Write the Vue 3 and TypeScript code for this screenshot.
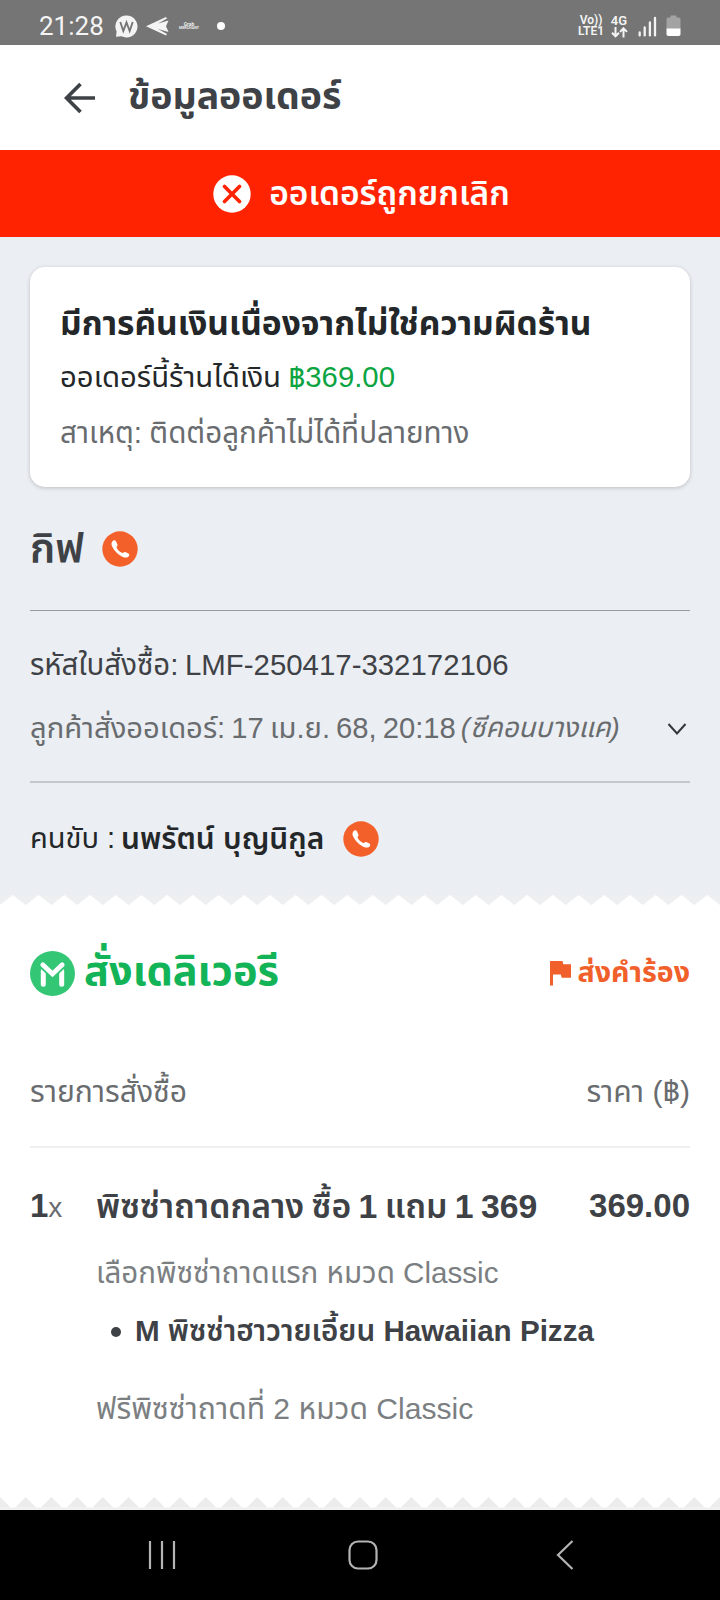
<script setup lang="ts">
interface Option {
  title: string
  choices: string[]
}

const refund = {
  title: 'มีการคืนเงินเนื่องจากไม่ใช่ความผิดร้าน',
  label: 'ออเดอร์นี้ร้านได้เงิน',
  amount: '฿369.00',
  reason: 'สาเหตุ: ติดต่อลูกค้าไม่ได้ที่ปลายทาง',
}

const options: Option[] = [
  { title: 'เลือกพิซซ่าถาดแรก หมวด Classic', choices: ['M พิซซ่าฮาวายเอี้ยน Hawaiian Pizza'] },
  { title: 'ฟรีพิซซ่าถาดที่ 2 หมวด Classic', choices: [] },
]

const TEETH = 28
const step = 720 / TEETH

// Saw-tooth edges of the receipt: teeth pointing down (top) or up (bottom).
const downTeeth = Array.from({ length: TEETH + 1 }, (_, i) => {
  const x = i * step
  return `M${x - step / 2} 0L${x} 10L${x + step / 2} 0Z`
}).join('')
const upTeeth = Array.from({ length: TEETH + 1 }, (_, i) => {
  const x = i * step
  return `M${x - 10.5} 10.5L${x} 0L${x + 10.5} 10.5Z`
}).join('')
</script>

<template>
  <div class="screen">
    <div class="status">
      <span class="time">21:28</span>
      <svg class="s-w" width="23" height="23" viewBox="0 0 23 23">
        <path d="M11.5.5a11 11 0 1 1-5 20.8L1 21.8l.6-5.2A11 11 0 0 1 11.5.5Z" fill="#f4f4f4" />
        <path d="M5.3 7l3 9 3.2-8.6 3.2 8.6 3-9" fill="none" stroke="#757575" stroke-width="1.9" />
      </svg>
      <svg class="s-plane" width="23" height="21" viewBox="0 0 23 21">
        <path d="M0 10.3L20 1l1 1.5L12 7.600 22.500 4.600 20 10.300l2.500 5.700L12 13l9 5.100-1 1.500Z" fill="#f4f4f4" />
      </svg>
      <span class="s-grab"><span>Grab</span><small>MERCHANT</small></span>
      <i class="s-dot"></i>
      <span class="volte"><span>Vo))</span><span>LTE1</span></span>
      <span class="net">
        <span>4G</span>
        <svg width="17" height="11" viewBox="0 0 17 11">
          <path d="M4.500 0v9M1 5.700l3.500 3.600L8 5.700M12.500 10.500V1.300M9 4.900l3.500-3.600L16 4.900" fill="none" stroke="#f4f4f4" stroke-width="2" />
        </svg>
      </span>
      <svg class="s-signal" width="19" height="21" viewBox="0 0 19 21">
        <path d="M1.700 19.400v-3M6.700 19.400v-8M11.900 19.400v-13M17 19.400V2" stroke="#f4f4f4" stroke-width="2.300" stroke-linecap="round" />
      </svg>
      <svg class="s-battery" width="15" height="22" viewBox="0 0 15 22">
        <path d="M4.500 0.500h6v2h2.200a1.800 1.800 0 0 1 1.800 1.800V14H.5V4.300a1.800 1.800 0 0 1 1.800-1.800h2.200Z" fill="#a3a3a3" />
        <path d="M.5 13.500h14v5.700a1.800 1.800 0 0 1-1.800 1.800H2.300a1.800 1.800 0 0 1-1.800-1.800Z" fill="#fff" />
      </svg>
    </div>

    <header class="header">
      <svg width="32" height="32" viewBox="0 0 32 32">
        <path d="M31 16H3M16.500 2L2.500 16l14 14" fill="none" stroke="#3e4246" stroke-width="3.700" />
      </svg>
      <h1>ข้อมูลออเดอร์</h1>
    </header>

    <div class="banner">
      <svg width="38" height="38" viewBox="0 0 38 38">
        <circle cx="19" cy="19" r="18.700" fill="#fff" />
        <path d="M11.500 11.500l15 15M26.500 11.500l-15 15" stroke="#ff2302" stroke-width="3.700" stroke-linecap="round" />
      </svg>
      <span>ออเดอร์ถูกยกเลิก</span>
    </div>

    <section class="info">
      <div class="card">
        <h2>{{ refund.title }}</h2>
        <p class="earn">{{ refund.label }} <b>{{ refund.amount }}</b></p>
        <p class="reason">{{ refund.reason }}</p>
      </div>

      <div class="customer">
        <span>กิฟ</span>
        <svg class="phone" viewBox="0 0 36 36">
          <circle cx="18" cy="18" r="17.700" fill="#f4602a" />
          <path d="M10 10.900c.8-1.400 2.900-2.200 3.800-.8l1.600 3.300c.5 1.300-1 2.100-.9 2.900.7 2.500 3.300 4.900 5.900 5.600 1 .2 1.600-1.400 2.900-.9l3.100 1.400c1.500.8.8 2.700-.3 3.500-1.900 1.300-4.700.5-6.700-.6-3.600-1.900-7.200-5.700-9-9.300-.8-1.700-1.400-3.700-.4-5.100Z" fill="#fff" />
        </svg>
      </div>

      <div class="order">
        <p class="code"><span class="code-label">รหัสใบสั่งซื้อ:</span><span class="code-value">LMF-250417-332172106</span></p>
        <div class="placed">
          <p>ลูกค้าสั่งออเดอร์: 17 เม.ย. 68, 20:18</p>
          <em>(ซีคอนบางแค)</em>
          <svg width="20" height="14" viewBox="0 0 20 14">
            <path d="M1.500 2L10 11.500 18.500 2" fill="none" stroke="#33373a" stroke-width="2" />
          </svg>
        </div>
      </div>

      <div class="driver">
        <span class="driver-label">คนขับ :</span>
        <b>นพรัตน์ บุญนิกูล</b>
        <svg class="phone" viewBox="0 0 36 36">
          <circle cx="18" cy="18" r="17.700" fill="#f4602a" />
          <path d="M10 10.900c.8-1.400 2.900-2.200 3.800-.8l1.600 3.300c.5 1.300-1 2.100-.9 2.900.7 2.500 3.300 4.900 5.900 5.600 1 .2 1.600-1.400 2.900-.9l3.100 1.400c1.500.8.8 2.700-.3 3.500-1.900 1.300-4.700.5-6.700-.6-3.600-1.900-7.200-5.700-9-9.300-.8-1.700-1.400-3.700-.4-5.100Z" fill="#fff" />
        </svg>
      </div>
    </section>

    <svg class="teeth" width="720" height="11" viewBox="0 0 720 11"><path :d="downTeeth" fill="#eeeff0" /></svg>

    <section class="receipt">
      <div class="delivery">
        <svg width="45" height="45" viewBox="0 0 45 45">
          <circle cx="22.500" cy="22.500" r="22.500" fill="#33c775" />
          <path d="M13.300 20v13.200M31.700 20v13.200" stroke="#fff" stroke-width="5" stroke-linecap="round" />
          <path d="M12.500 14.500l10 9.500 10-9.500" fill="none" stroke="#33c775" stroke-width="7" stroke-linecap="round" stroke-linejoin="round" />
          <path d="M12.800 13.800l9.700 9.200 9.700-9.200" fill="none" stroke="#fff" stroke-width="4.800" stroke-linecap="round" />
        </svg>
        <h3>สั่งเดลิเวอรี</h3>
        <span class="request">
          <svg width="21" height="25" viewBox="0 0 21 25"><path d="M0 0h12.500l.8 3.300H21v13.500h-9.300l-.9-3.200H3V24.500H0Z" fill="#f15f2b" /></svg>
          <b>ส่งคำร้อง</b>
        </span>
      </div>

      <div class="columns"><span>รายการสั่งซื้อ</span><span>ราคา (฿)</span></div>

      <div class="line">
        <span class="qty"><b>1</b>x</span>
        <b class="name">พิซซ่าถาดกลาง ซื้อ 1 แถม 1 369</b>
        <b class="price">369.00</b>
      </div>
      <div v-for="o in options" :key="o.title" class="option">
        <p>{{ o.title }}</p>
        <div v-for="c in o.choices" :key="c" class="choice"><i></i><b>{{ c }}</b></div>
      </div>
    </section>

    <svg class="teeth" width="720" height="13" viewBox="0 0 720 13"><path :d="upTeeth" fill="#ececec" /><path d="M0 10.500h720V13H0Z" fill="#f0f0f0" /></svg>

    <nav class="nav">
      <svg width="28" height="30" viewBox="0 0 28 30"><path d="M2 1v28M14 1v28M26 1v28" stroke="#b4b4b4" stroke-width="2.200" /></svg>
      <svg width="30" height="30" viewBox="0 0 30 30"><rect x="1.500" y="1.500" width="27" height="27" rx="8.500" fill="none" stroke="#b4b4b4" stroke-width="2.200" /></svg>
      <svg width="18" height="30" viewBox="0 0 18 30"><path d="M16.500 1L2 15l14.500 14" fill="none" stroke="#b4b4b4" stroke-width="2.200" /></svg>
    </nav>
  </div>
</template>

<style>
body { margin: 0; background: #fff; }
</style>

<style scoped>
.screen {
  width: 720px;
  height: 1600px;
  overflow: hidden;
  display: flex;
  flex-direction: column;
  background: #fff;
  color: #3e4246;
  font-family: "Liberation Sans", "Noto Sans Thai", "Noto Sans", sans-serif;
  white-space: nowrap;
}
.screen > * { flex-shrink: 0; }
h1, h2, h3, p { margin: 0; }
svg { display: block; flex-shrink: 0; }

.status {
  box-sizing: border-box;
  height: 45px;
  padding: 7px 39px 0 39px;
  display: flex;
  align-items: center;
  background: #757575;
  color: #f4f4f4;
  font-family: Roboto, sans-serif;
}
.time { width: 76px; font-size: 26px; line-height: 38px; }
.s-plane { margin-left: 8px; }
.s-grab {
  width: 20px;
  margin-left: 10px;
  display: flex;
  flex-direction: column;
  align-items: center;
  font-size: 5px;
  line-height: 4.500px;
  font-weight: 600;
}
.s-grab small { font-size: 3.700px; }
.s-dot { width: 8px; height: 8px; margin-left: 18px; border-radius: 50%; background: #fff; }
.volte {
  width: 28px;
  margin-left: auto;
  display: flex;
  flex-direction: column;
  align-items: center;
  font-size: 12px;
  line-height: 11px;
  font-weight: 600;
}
.net {
  width: 18px;
  margin-left: 5px;
  display: flex;
  flex-direction: column;
  align-items: center;
  font-size: 13px;
  line-height: 12px;
  font-weight: 600;
}
.s-signal { margin-left: 10px; }
.s-battery { margin-left: 9px; }

.header {
  height: 105px;
  padding-left: 64px;
  display: flex;
  align-items: center;
  gap: 32px;
  background: #fff;
}
.header h1 { margin-bottom: 3px; font-size: 37.500px; font-weight: 700; line-height: 60px; }

.banner {
  height: 87px;
  padding-left: 3px;
  box-sizing: border-box;
  display: flex;
  align-items: center;
  justify-content: center;
  gap: 18px;
  background: #ff2302;
  color: #fff;
  font-size: 33.500px;
  font-weight: 600;
}
.banner span { margin-top: 2px; }

.info { height: 658px; box-sizing: border-box; padding: 30px 30px 0; background: #ebeef2; }
.card {
  box-sizing: border-box;
  height: 220px;
  padding: 31px 30px 0;
  border-radius: 15px;
  background: #fff;
  box-shadow: 0 1px 4px rgba(0, 0, 0, 0.2);
  color: #242729;
}
.card h2 { font-size: 33.500px; font-weight: 700; line-height: 52px; }
.earn { font-size: 29.300px; line-height: 53px; word-spacing: -1px; }
.earn b { font-weight: 400; color: #0da442; }
.reason { font-size: 29.600px; line-height: 59px; word-spacing: -1px; color: #696c6f; }

.customer {
  height: 123px;
  display: flex;
  align-items: center;
  gap: 18px;
  font-size: 41px;
  font-weight: 600;
}
.customer span { margin-top: 2px; }
.phone { width: 36px; height: 36px; }

.order {
  box-sizing: border-box;
  height: 173px;
  padding-top: 24px;
  border-top: 1px solid #979b9f;
  border-bottom: 2px solid #c4c8cc;
}
.code { display: flex; font-size: 29.400px; line-height: 60px; }
.code-label { width: 155px; font-size: 29.400px; }
.placed {
  display: flex;
  align-items: center;
  font-size: 29.200px;
  line-height: 66px;
  word-spacing: -2px;
  color: #696c6f;
}
.placed em { margin-left: 5px; font-size: 27.700px; }
.placed svg { margin: 2px 3px 0 auto; }

.driver {
  height: 112px;
  display: flex;
  align-items: center;
  font-size: 29.900px;
  color: #242729;
}
.driver-label { width: 91px; font-size: 29px; }
.driver b { font-weight: 600; }
.driver .phone { margin-left: 19px; }

.receipt { box-sizing: border-box; height: 591px; padding: 0 30px; }
.delivery { height: 135px; display: flex; align-items: center; }
.delivery h3 { margin: 0 0 2px 9px; font-size: 41.500px; font-weight: 700; color: #12b457; }
.request {
  margin-left: auto;
  display: flex;
  align-items: center;
  gap: 6px;
  color: #f15f2b;
  font-size: 28.600px;
}
.request b { margin-bottom: 1px; }
.columns {
  height: 105px;
  display: flex;
  justify-content: space-between;
  border-bottom: 2px solid #f0f0f1;
  font-size: 30.100px;
  line-height: 101px;
  color: #696c6f;
}
.line { display: flex; margin-top: 28px; line-height: 60px; font-size: 33.800px; }
.line b { font-weight: 600; }
.qty { width: 66px; font-size: 28px; color: #696c6f; }
.qty b { font-size: 33px; color: #3e4246; }
.name { word-spacing: -2px; }
.price { margin-left: auto; font-size: 33px; }
.option { margin: 5px 0 0 66px; font-size: 29.600px; line-height: 60px; color: #7b7f82; }
.option + .option { margin-top: 20px; font-size: 30.100px; }
.choice { display: flex; align-items: center; line-height: 56px; color: #3e4246; }
.choice i { width: 10px; height: 10px; margin: 2px 14px 0 15px; border-radius: 50%; background: #3e4246; }
.choice b { font-weight: 600; }

.nav {
  box-sizing: border-box;
  height: 90px;
  padding: 0 146px 0 148px;
  display: grid;
  grid-template-columns: 200px 1fr 18px;
  align-items: center;
  background: #000;
}
</style>
